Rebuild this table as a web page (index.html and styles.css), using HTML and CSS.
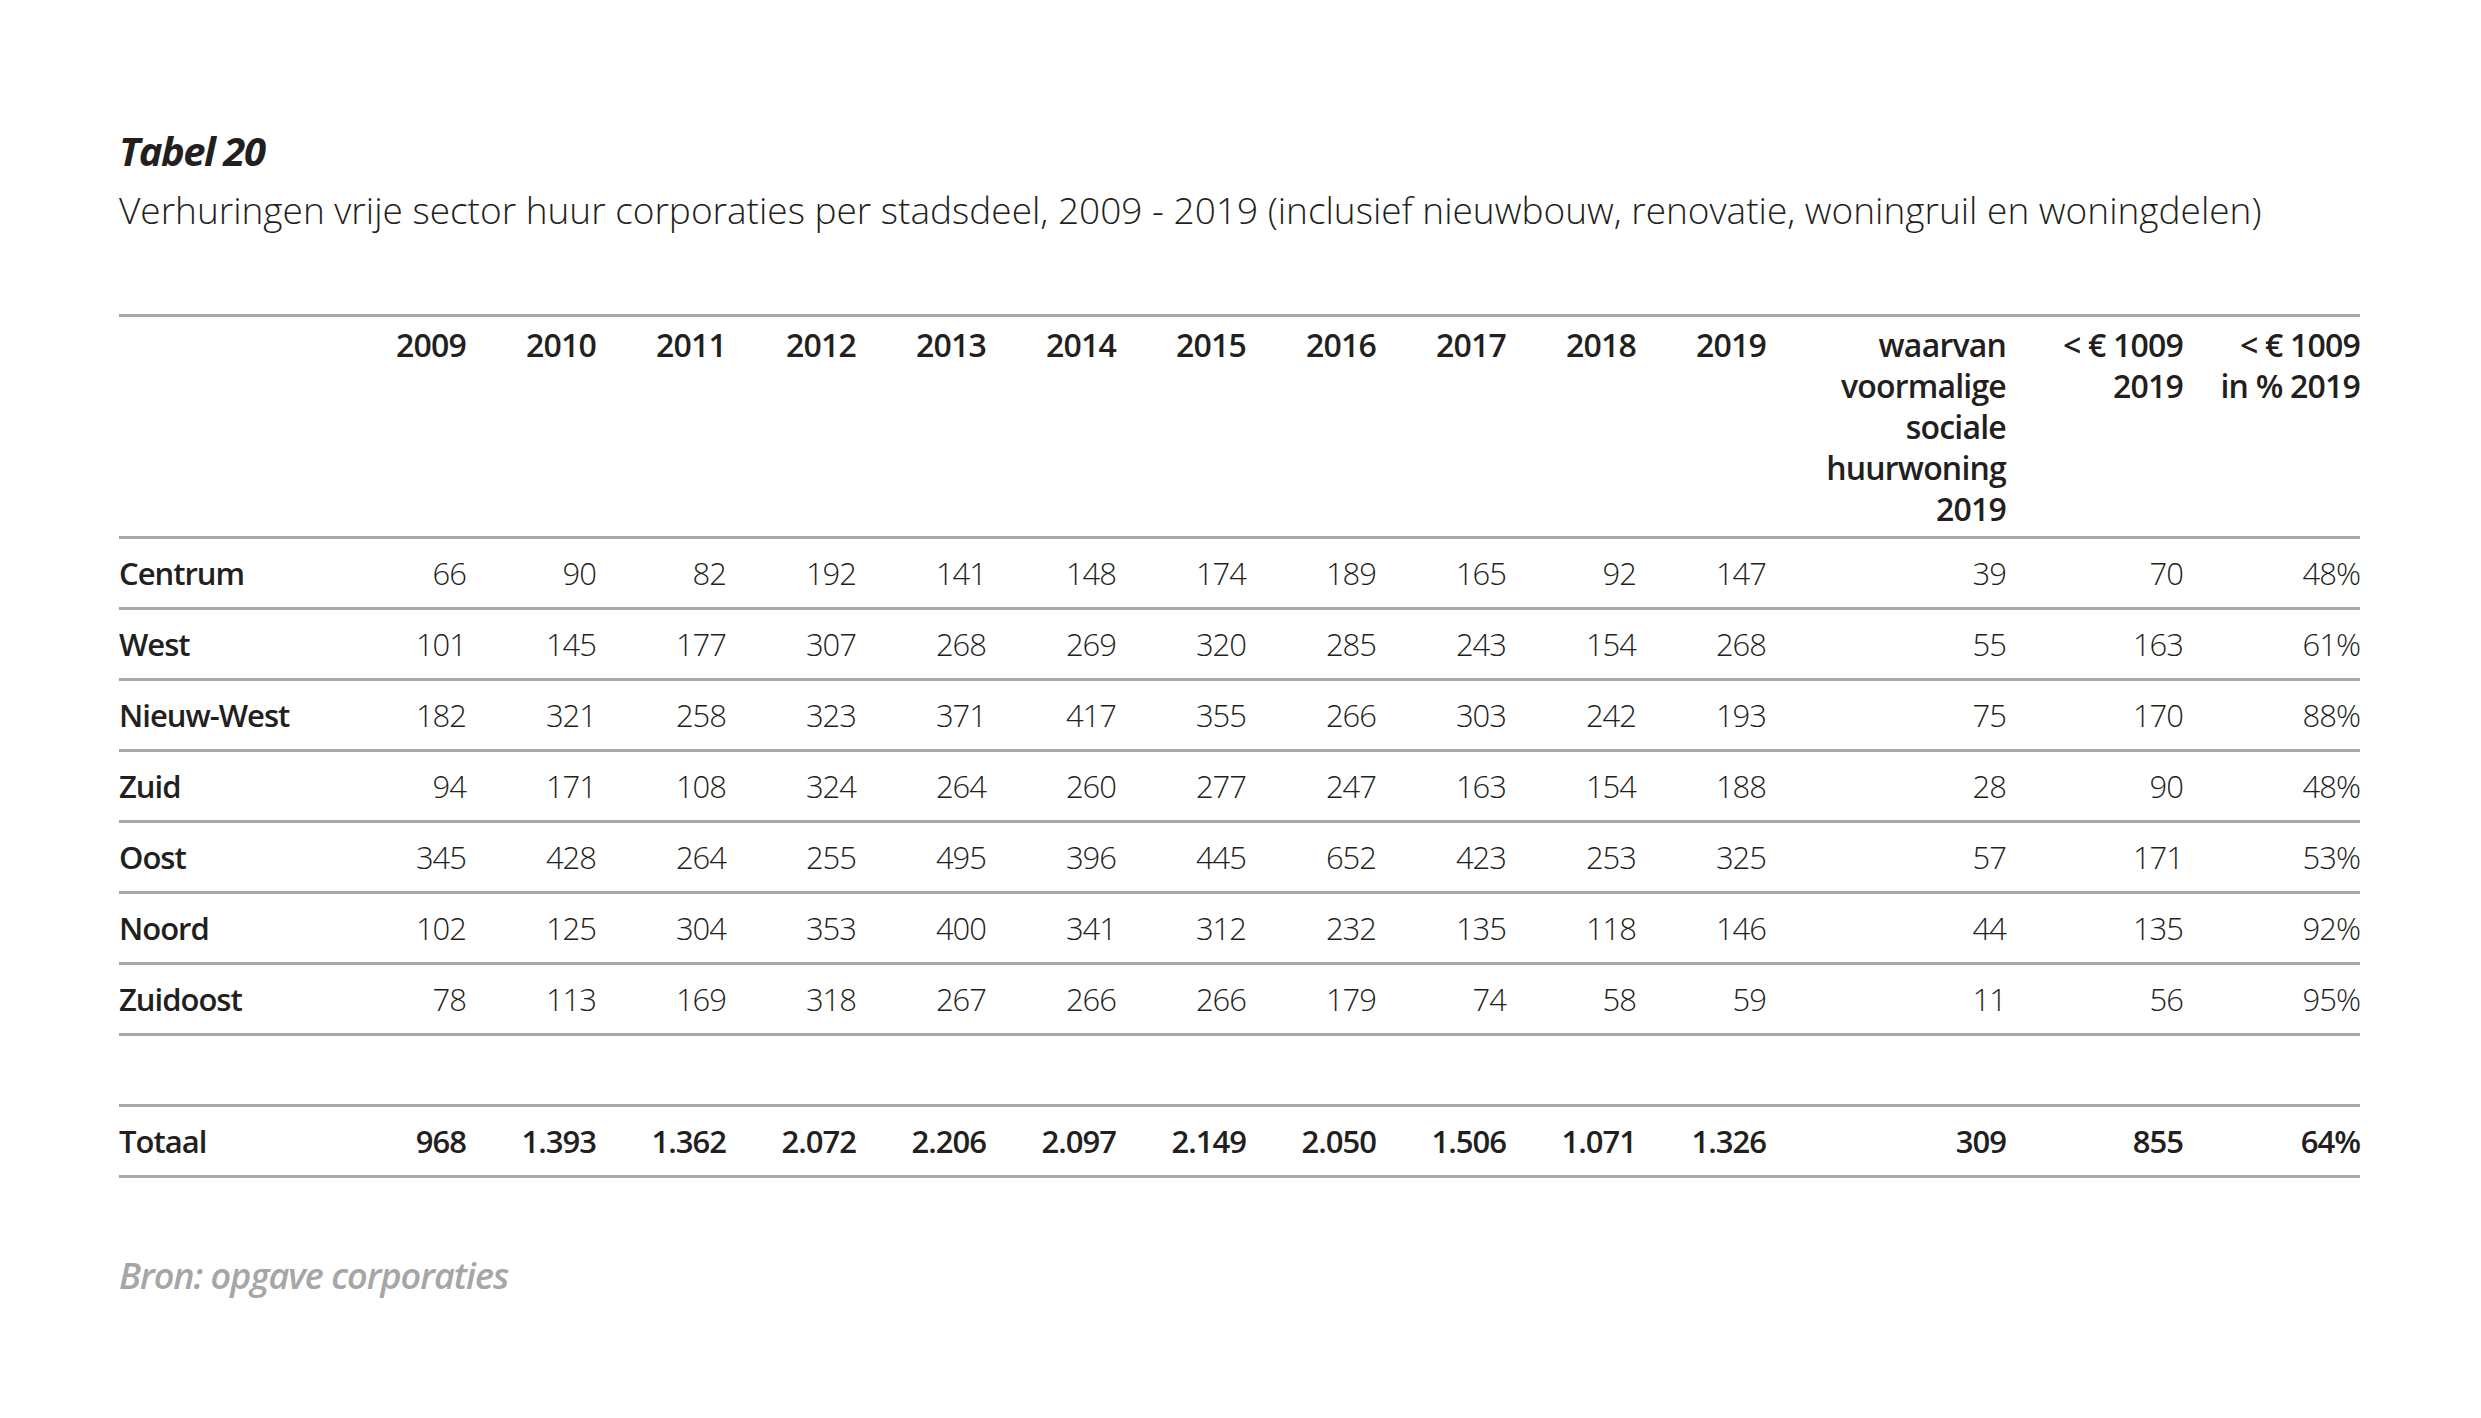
FILE: index.html
```html
<!DOCTYPE html>
<html lang="nl">
<head>
<meta charset="utf-8">
<title>Tabel 20</title>
<link rel="stylesheet" href="styles.css">
</head>
<body>
<main class="page">
  <h1 class="title">Tabel 20</h1>
  <p class="subtitle">Verhuringen vrije sector huur corporaties per stadsdeel, 2009 - 2019 (inclusief nieuwbouw, renovatie, woningruil en woningdelen)</p>
  <table class="data">
    <colgroup>
      <col class="c-label">
      <col class="c-year"><col class="c-year"><col class="c-year"><col class="c-year"><col class="c-year"><col class="c-year">
      <col class="c-year"><col class="c-year"><col class="c-year"><col class="c-year"><col class="c-year">
      <col class="c-wide">
      <col class="c-mid">
      <col class="c-mid">
    </colgroup>
    <thead>
      <tr>
        <th></th>
        <th>2009</th><th>2010</th><th>2011</th><th>2012</th><th>2013</th><th>2014</th>
        <th>2015</th><th>2016</th><th>2017</th><th>2018</th><th>2019</th>
        <th>waarvan<br>voormalige<br>sociale<br>huurwoning<br>2019</th>
        <th>&lt; € 1009<br>2019</th>
        <th>&lt; € 1009<br>in % 2019</th>
      </tr>
    </thead>
    <tbody>
      <tr><th>Centrum</th><td>66</td><td>90</td><td>82</td><td>192</td><td>141</td><td>148</td><td>174</td><td>189</td><td>165</td><td>92</td><td>147</td><td>39</td><td>70</td><td>48%</td></tr>
      <tr><th>West</th><td>101</td><td>145</td><td>177</td><td>307</td><td>268</td><td>269</td><td>320</td><td>285</td><td>243</td><td>154</td><td>268</td><td>55</td><td>163</td><td>61%</td></tr>
      <tr><th>Nieuw-West</th><td>182</td><td>321</td><td>258</td><td>323</td><td>371</td><td>417</td><td>355</td><td>266</td><td>303</td><td>242</td><td>193</td><td>75</td><td>170</td><td>88%</td></tr>
      <tr><th>Zuid</th><td>94</td><td>171</td><td>108</td><td>324</td><td>264</td><td>260</td><td>277</td><td>247</td><td>163</td><td>154</td><td>188</td><td>28</td><td>90</td><td>48%</td></tr>
      <tr><th>Oost</th><td>345</td><td>428</td><td>264</td><td>255</td><td>495</td><td>396</td><td>445</td><td>652</td><td>423</td><td>253</td><td>325</td><td>57</td><td>171</td><td>53%</td></tr>
      <tr><th>Noord</th><td>102</td><td>125</td><td>304</td><td>353</td><td>400</td><td>341</td><td>312</td><td>232</td><td>135</td><td>118</td><td>146</td><td>44</td><td>135</td><td>92%</td></tr>
      <tr><th>Zuidoost</th><td>78</td><td>113</td><td>169</td><td>318</td><td>267</td><td>266</td><td>266</td><td>179</td><td>74</td><td>58</td><td>59</td><td>11</td><td>56</td><td>95%</td></tr>
      <tr class="spacer"><th></th><td></td><td></td><td></td><td></td><td></td><td></td><td></td><td></td><td></td><td></td><td></td><td></td><td></td><td></td></tr>
      <tr class="total"><th>Totaal</th><td>968</td><td>1.393</td><td>1.362</td><td>2.072</td><td>2.206</td><td>2.097</td><td>2.149</td><td>2.050</td><td>1.506</td><td>1.071</td><td>1.326</td><td>309</td><td>855</td><td>64%</td></tr>
    </tbody>
  </table>
  <p class="source">Bron: opgave corporaties</p>
</main>
</body>
</html>
```

FILE: styles.css
```css
html, body {
  margin: 0;
  padding: 0;
  background: #ffffff;
}

body {
  font-family: "Open Sans", "Noto Sans", "Liberation Sans", sans-serif;
  color: #231f20;
}

.page {
  padding: 123px 0 0 119px;
}

.title {
  margin: 0;
  font-size: 40px;
  line-height: 56px;
  font-weight: 700;
  font-style: italic;
  letter-spacing: -1.5px;
}

.subtitle {
  margin: 7px 0 0 0;
  font-size: 37px;
  line-height: 48px;
  font-weight: 300;
  letter-spacing: 0;
}

.data {
  margin-top: 80px;
  width: 2240px;
  table-layout: fixed;
  border-collapse: collapse;
  font-size: 31px;
}

.c-label { width: 217px; }
.c-year { width: 130px; }
.c-wide { width: 240px; }
.c-mid { width: 177px; }

.data thead tr {
  border-top: 3px solid #a8a8a8;
}

.data tr {
  border-bottom: 3px solid #a8a8a8;
}

.data th,
.data td {
  padding: 0;
  text-align: right;
}

.data thead th {
  font-size: 32px;
  font-weight: 600;
  line-height: 41px;
  vertical-align: top;
  padding: 7px 0 7px 0;
  letter-spacing: -0.8px;
}

.data tbody tr {
  height: 71px;
}

.data tbody th {
  text-align: left;
  font-weight: 600;
  letter-spacing: -1px;
}

.data tbody td {
  font-weight: 300;
  letter-spacing: -1px;
}

.data tbody tr.total td {
  font-weight: 600;
}

.source {
  margin: 74px 0 0 0;
  font-size: 36px;
  line-height: 48px;
  font-weight: 600;
  font-style: italic;
  color: #a6a6a6;
  letter-spacing: -1px;
}
```
